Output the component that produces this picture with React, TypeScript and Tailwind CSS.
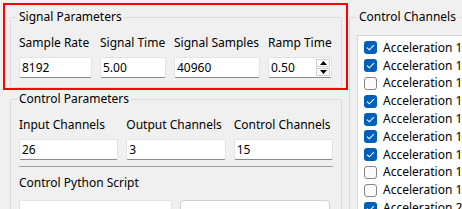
import React from "react";

const channels: { label: string; checked: boolean }[] = [
  { label: "Acceleration 1", checked: true },
  { label: "Acceleration 1", checked: true },
  { label: "Acceleration 1", checked: false },
  { label: "Acceleration 1", checked: true },
  { label: "Acceleration 1", checked: true },
  { label: "Acceleration 1", checked: true },
  { label: "Acceleration 1", checked: true },
  { label: "Acceleration 1", checked: false },
  { label: "Acceleration 1", checked: false },
  { label: "Acceleration 2", checked: true },
];

function Input({ value, className = "" }: { value?: string; className?: string }) {
  return (
    <div
      className={`h-[21px] bg-white border border-[#e3e3e3] border-b-[#8a8a8a] rounded-[2px] pl-[2px] flex items-center leading-[16px] ${className}`}
    >
      {value}
    </div>
  );
}

function Check({ checked }: { checked: boolean }) {
  return checked ? (
    <div className="w-[13px] h-[13px] rounded-[3px] bg-[#005fb8] flex items-center justify-center shrink-0">
      <svg width="9" height="7" viewBox="0 0 9 7">
        <path d="M1 3.6 L3.3 5.8 L8 1.2" fill="none" stroke="white" strokeWidth="1.1" />
      </svg>
    </div>
  ) : (
    <div className="w-[13px] h-[13px] rounded-[3px] bg-[#fbfbfb] border border-[#868686] shrink-0" />
  );
}

export default function App() {
  return (
    <div className="w-[462px] h-[209px] overflow-hidden bg-[#f0f0f0] flex font-['Noto_Sans',sans-serif] text-[12px] leading-[16px] text-black">
      {/* left column */}
      <div className="w-[349px] shrink-0 pl-[3px] pt-[3px] flex flex-col">
        <div className="w-[345px] h-[91px] border-2 border-[#ff0000] pl-[5px] pt-[5px]">
          <fieldset className="w-[332px] h-[78px] border border-[#dcdcdc] rounded-[2px] px-[8px] pt-[11px]">
            <legend className="-ml-[2px] px-[2px] leading-[14px]">Signal Parameters</legend>
            <div className="grid grid-cols-[73px_66px_86px_64px] gap-x-[8px] -mr-[1px]">
              <div className="whitespace-nowrap">Sample Rate</div>
              <div className="whitespace-nowrap">Signal Time</div>
              <div className="whitespace-nowrap">Signal Samples</div>
              <div className="whitespace-nowrap">Ramp Time</div>
              <Input value="8192" className="mt-[6px]" />
              <Input value="5.00" className="mt-[6px]" />
              <Input value="40960" className="mt-[6px]" />
              <div className="mt-[6px] h-[21px] bg-white border border-[#e3e3e3] border-b-[#8a8a8a] rounded-[2px] pl-[2px] flex items-center">
                <span className="flex-1">0.50</span>
                <div className="w-[15px] h-[19px] flex flex-col gap-[1px] pr-[1px] py-[1px]">
                  <div className="flex-1 border border-[#d0d0d0] bg-[#fafafa] flex items-center justify-center">
                    <svg width="7" height="4" viewBox="0 0 7 4">
                      <path d="M0 4 L3.5 0 L7 4 Z" fill="#000" />
                    </svg>
                  </div>
                  <div className="flex-1 border border-[#d0d0d0] bg-[#fafafa] flex items-center justify-center">
                    <svg width="7" height="4" viewBox="0 0 7 4">
                      <path d="M0 0 L3.5 4 L7 0 Z" fill="#000" />
                    </svg>
                  </div>
                </div>
              </div>
            </div>
          </fieldset>
        </div>
        <fieldset className="mt-[2px] ml-[7px] w-[332px] border border-[#dcdcdc] rounded-[2px] px-[8px] pt-[11px] pb-[20px]">
          <legend className="-ml-[2px] px-[2px] leading-[14px]">Control Parameters</legend>
          <div className="grid grid-cols-3 gap-x-[8px]">
            <div className="whitespace-nowrap">Input Channels</div>
            <div className="whitespace-nowrap">Output Channels</div>
            <div className="whitespace-nowrap">Control Channels</div>
            <Input value="26" className="mt-[6px]" />
            <Input value="3" className="mt-[6px]" />
            <Input value="15" className="mt-[6px]" />
          </div>
          <div className="mt-[6px] h-px bg-[#a0a0a0]" />
          <div className="mt-[8px]">Control Python Script</div>
          <div className="mt-[9px] flex gap-[8px]">
            <Input className="w-[153px]" />
            <div className="w-[150px] h-[23px] rounded-[4px] border border-[#d0d0d0] bg-[#fdfdfd]" />
          </div>
        </fieldset>
      </div>
      {/* right column */}
      <div className="flex-1 min-w-0 pt-[10px]">
        <fieldset className="w-[200px] h-[300px] border border-[#dcdcdc] rounded-[2px] pl-[7px] pt-[11px]">
          <legend className="ml-0 px-[2px] leading-[14px]">Control Channels</legend>
          <div className="bg-white border border-[#d4d4d4] h-[260px] pt-[3px] pl-[6px]">
            {channels.map((c, i) => (
              <div key={i} className="h-[17.8px] flex items-center gap-[6px] whitespace-nowrap">
                <Check checked={c.checked} />
                <span>{c.label}</span>
              </div>
            ))}
          </div>
        </fieldset>
      </div>
    </div>
  );
}
